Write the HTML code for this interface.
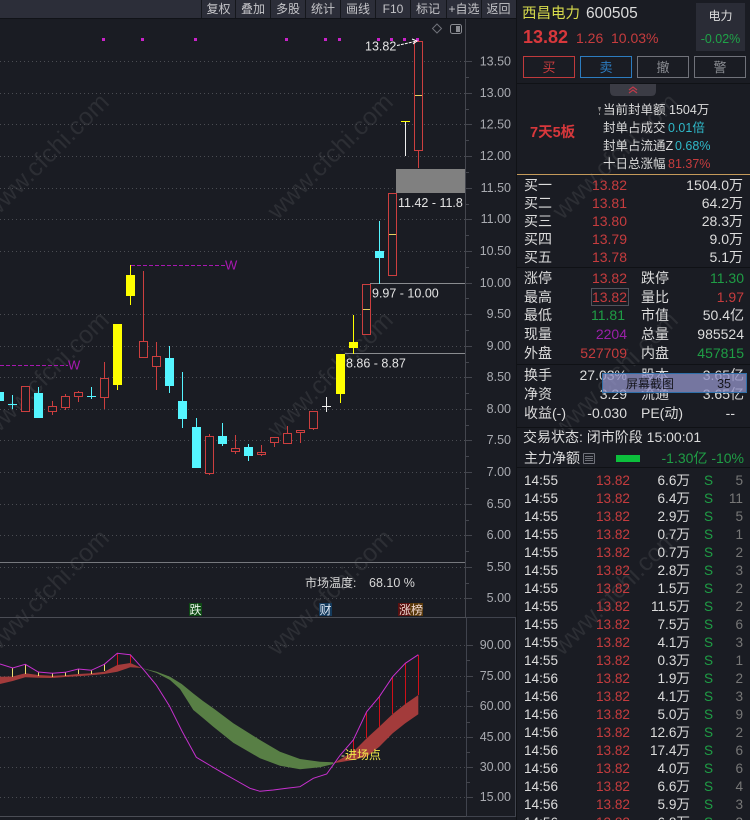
<!DOCTYPE html>
<html><head><meta charset="utf-8"><style>
html,body{margin:0;padding:0;background:#1a1c23;overflow:hidden}
svg{display:block;font-family:"Liberation Sans","Noto Sans CJK SC",sans-serif}
.g line{stroke:#4a4c52;stroke-width:1;stroke-dasharray:1 3}
.f{fill:#cc3f3f}.b{fill:#1a1c23}
.rl{stroke:#cc3f3f;stroke-width:1}
.cy{fill:#55f5ff}.cl{stroke:#55f5ff;stroke-width:1}
.ye{fill:#ffff00}.yl{stroke:#ffff00;stroke-width:1}
.wl{stroke:#eee;stroke-width:1}
.sh{shape-rendering:crispEdges}
.ax text{fill:#a8aab0;font-size:12.5px;text-anchor:end}
.w{fill:#dcdcdc}.rd{fill:#c63c3e}.gn{fill:#1f9d45}.gy{fill:#777}
.e{text-anchor:end}
.p text{font-size:14px}
.t text{font-size:13.6px}
.tb text{fill:#c4c4c8;font-size:12px;text-anchor:middle}
.wm text{fill:#2c2e34;font-size:25px;text-anchor:middle}
.lb{fill:#e4e4e4;font-size:12.5px}
</style></head><body>
<svg width="750" height="820" viewBox="0 0 750 820" xmlns="http://www.w3.org/2000/svg">
<rect width="750" height="820" fill="#1a1c23"/>

<!-- watermark -->
<g class="wm">
<text transform="translate(52,162) rotate(-45)">www.cfchi.com</text>
<text transform="translate(52,380) rotate(-45)">www.cfchi.com</text>
<text transform="translate(52,598) rotate(-45)">www.cfchi.com</text>
<text transform="translate(336,162) rotate(-45)">www.cfchi.com</text>
<text transform="translate(336,380) rotate(-45)">www.cfchi.com</text>
<text transform="translate(336,598) rotate(-45)">www.cfchi.com</text>
<text transform="translate(621,162) rotate(-45)">www.cfchi.com</text>
<text transform="translate(621,380) rotate(-45)">www.cfchi.com</text>
<text transform="translate(621,598) rotate(-45)">www.cfchi.com</text>
</g>

<!-- toolbar -->
<g class="sh">
<rect x="0" y="0" width="516" height="18" fill="#2c2e39"/>
<rect x="0" y="18" width="516" height="1" fill="#111318"/>
<rect x="201" y="0" width="1" height="18" fill="#15171c"/>
<rect x="235" y="0" width="1" height="18" fill="#15171c"/>
<rect x="270" y="0" width="1" height="18" fill="#15171c"/>
<rect x="305" y="0" width="1" height="18" fill="#15171c"/>
<rect x="340" y="0" width="1" height="18" fill="#15171c"/>
<rect x="375" y="0" width="1" height="18" fill="#15171c"/>
<rect x="410" y="0" width="1" height="18" fill="#15171c"/>
<rect x="446" y="0" width="1" height="18" fill="#15171c"/>
<rect x="481" y="0" width="1" height="18" fill="#15171c"/>
</g>
<g class="tb">
<text x="218.500" y="13">复权</text><text x="253" y="13">叠加</text><text x="288" y="13">多股</text><text x="323" y="13">统计</text><text x="358" y="13">画线</text><text x="393" y="13">F10</text><text x="428" y="13">标记</text><text x="464" y="13">+自选</text><text x="498.500" y="13">返回</text>
</g>

<!-- grid -->
<g class="g sh">
<line x1="0" x2="465" y1="61.500" y2="61.500"/><line x1="0" x2="465" y1="93.500" y2="93.500"/><line x1="0" x2="465" y1="124.500" y2="124.500"/><line x1="0" x2="465" y1="156.500" y2="156.500"/><line x1="0" x2="465" y1="188.500" y2="188.500"/><line x1="0" x2="465" y1="219.500" y2="219.500"/><line x1="0" x2="465" y1="251.500" y2="251.500"/><line x1="0" x2="465" y1="314.500" y2="314.500"/><line x1="0" x2="465" y1="346.500" y2="346.500"/><line x1="0" x2="465" y1="377.500" y2="377.500"/><line x1="0" x2="465" y1="409.500" y2="409.500"/><line x1="0" x2="465" y1="440.500" y2="440.500"/><line x1="0" x2="465" y1="472.500" y2="472.500"/><line x1="0" x2="465" y1="504.500" y2="504.500"/><line x1="0" x2="465" y1="535.500" y2="535.500"/><line x1="0" x2="465" y1="567.500" y2="567.500"/><line x1="0" x2="465" y1="598.500" y2="598.500"/>
<line x1="0" x2="465" y1="645.500" y2="645.500"/><line x1="0" x2="465" y1="676.500" y2="676.500"/><line x1="0" x2="465" y1="706.500" y2="706.500"/><line x1="0" x2="465" y1="737.500" y2="737.500"/><line x1="0" x2="465" y1="767.500" y2="767.500"/><line x1="0" x2="465" y1="797.500" y2="797.500"/>
</g>

<!-- frame lines -->
<g class="sh" stroke-width="1">
<line x1="465.500" x2="465.500" y1="19" y2="617" stroke="#44464e"/>
<line x1="0" x2="465" y1="562.500" y2="562.500" stroke="#77797e"/>
<line x1="0" x2="516" y1="617.500" y2="617.500" stroke="#4b4d55"/>
<line x1="0" x2="466" y1="816.500" y2="816.500" stroke="#4b4d55"/>
<rect x="466.500" y="617.500" width="49" height="199" fill="none" stroke="#40434d"/>
<line x1="516.500" x2="516.500" y1="0" y2="820" stroke="#101216"/>
<line x1="370" x2="465" y1="283.500" y2="283.500" stroke="#8a8c90"/>
<line x1="345" x2="465" y1="353.500" y2="353.500" stroke="#8a8c90"/>
</g>
<!-- axis ticks -->
<g class="sh" stroke="#44464e">
<line x1="465" x2="472" y1="61.500" y2="61.500"/><line x1="465" x2="469" y1="77.500" y2="77.500"/><line x1="465" x2="472" y1="93.500" y2="93.500"/><line x1="465" x2="469" y1="109.500" y2="109.500"/><line x1="465" x2="472" y1="124.500" y2="124.500"/><line x1="465" x2="469" y1="140.500" y2="140.500"/><line x1="465" x2="472" y1="156.500" y2="156.500"/><line x1="465" x2="469" y1="172.500" y2="172.500"/><line x1="465" x2="472" y1="188.500" y2="188.500"/><line x1="465" x2="469" y1="204.500" y2="204.500"/><line x1="465" x2="472" y1="219.500" y2="219.500"/><line x1="465" x2="469" y1="235.500" y2="235.500"/><line x1="465" x2="472" y1="251.500" y2="251.500"/><line x1="465" x2="469" y1="267.500" y2="267.500"/><line x1="465" x2="472" y1="283.500" y2="283.500"/><line x1="465" x2="469" y1="298.500" y2="298.500"/><line x1="465" x2="472" y1="314.500" y2="314.500"/><line x1="465" x2="469" y1="330.500" y2="330.500"/><line x1="465" x2="472" y1="346.500" y2="346.500"/><line x1="465" x2="469" y1="362.500" y2="362.500"/><line x1="465" x2="472" y1="377.500" y2="377.500"/><line x1="465" x2="469" y1="393.500" y2="393.500"/><line x1="465" x2="472" y1="409.500" y2="409.500"/><line x1="465" x2="469" y1="425.500" y2="425.500"/><line x1="465" x2="472" y1="440.500" y2="440.500"/><line x1="465" x2="469" y1="456.500" y2="456.500"/><line x1="465" x2="472" y1="472.500" y2="472.500"/><line x1="465" x2="469" y1="488.500" y2="488.500"/><line x1="465" x2="472" y1="504.500" y2="504.500"/><line x1="465" x2="469" y1="520.500" y2="520.500"/><line x1="465" x2="472" y1="535.500" y2="535.500"/><line x1="465" x2="469" y1="551.500" y2="551.500"/><line x1="465" x2="472" y1="567.500" y2="567.500"/><line x1="465" x2="469" y1="583.500" y2="583.500"/><line x1="465" x2="472" y1="598.500" y2="598.500"/>
<line x1="466" x2="473" y1="645.500" y2="645.500"/><line x1="466" x2="470" y1="660.500" y2="660.500"/><line x1="466" x2="473" y1="676.500" y2="676.500"/><line x1="466" x2="470" y1="691.500" y2="691.500"/><line x1="466" x2="473" y1="706.500" y2="706.500"/><line x1="466" x2="470" y1="722.500" y2="722.500"/><line x1="466" x2="473" y1="737.500" y2="737.500"/><line x1="466" x2="470" y1="752.500" y2="752.500"/><line x1="466" x2="473" y1="767.500" y2="767.500"/><line x1="466" x2="470" y1="782.500" y2="782.500"/><line x1="466" x2="473" y1="797.500" y2="797.500"/>
</g>
<g class="ax">
<text x="511" y="65.500">13.50</text><text x="511" y="97">13.00</text><text x="511" y="128.500">12.50</text><text x="511" y="160">12.00</text><text x="511" y="192">11.50</text><text x="511" y="223">11.00</text><text x="511" y="255">10.50</text><text x="511" y="287">10.00</text><text x="511" y="318">9.50</text><text x="511" y="350">9.00</text><text x="511" y="381">8.50</text><text x="511" y="413">8.00</text><text x="511" y="444">7.50</text><text x="511" y="476">7.00</text><text x="511" y="508">6.50</text><text x="511" y="539">6.00</text><text x="511" y="571">5.50</text><text x="511" y="602">5.00</text>
<text x="511" y="649">90.00</text><text x="511" y="680">75.00</text><text x="511" y="710">60.00</text><text x="511" y="741">45.00</text><text x="511" y="771">30.00</text><text x="511" y="801">15.00</text>
</g>

<!-- magenta dots -->
<g fill="#c822c8" class="sh">
<rect x="102" y="38" width="3" height="3"/><rect x="141" y="38" width="3" height="3"/><rect x="194" y="38" width="3" height="3"/><rect x="285" y="38" width="3" height="3"/><rect x="324" y="38" width="3" height="3"/><rect x="338" y="38" width="3" height="3"/><rect x="377" y="38" width="3" height="3"/><rect x="390" y="38" width="3" height="3"/><rect x="403" y="38" width="3" height="3"/><rect x="416" y="38" width="3" height="3"/>
</g>

<!-- gray zone -->
<rect x="396" y="169" width="69" height="24" fill="#808080" class="sh"/>

<!-- W lines -->
<g class="sh">
<line x1="131" x2="225" y1="265.500" y2="265.500" stroke="#a818b0" stroke-dasharray="4 2"/>
<line x1="0" x2="68" y1="365.500" y2="365.500" stroke="#a818b0" stroke-dasharray="4 2"/>
</g>
<text x="225" y="269.500" fill="#a818b0" font-size="13">W</text>
<text x="68" y="369.500" fill="#a818b0" font-size="13">W</text>

<!-- candles -->
<g class="sh">
<rect x="0" y="392" width="4" height="9" class="cy"/>
<line x1="12.500" x2="12.500" y1="395" y2="409" class="cl"/><line x1="8" x2="17" y1="404.500" y2="404.500" class="cl"/>
<rect x="21" y="386" width="9" height="26" class="f"/><rect x="22" y="387" width="7" height="24" class="b"/>
<line x1="38.500" x2="38.500" y1="387" y2="394" class="cl"/><rect x="34" y="393" width="9" height="25" class="cy"/>
<line x1="52.500" x2="52.500" y1="401" y2="415" class="rl"/><rect x="48" y="406" width="9" height="6" class="f"/><rect x="49" y="407" width="7" height="4" class="b"/>
<line x1="65.500" x2="65.500" y1="394" y2="410" class="rl"/><rect x="61" y="396" width="9" height="12" class="f"/><rect x="62" y="397" width="7" height="10" class="b"/>
<line x1="78.500" x2="78.500" y1="391" y2="402" class="rl"/><rect x="74" y="392" width="9" height="5" class="f"/><rect x="75" y="393" width="7" height="3" class="b"/>
<line x1="91.500" x2="91.500" y1="387" y2="399" class="cl"/><line x1="87" x2="96" y1="396.500" y2="396.500" class="cl"/>
<line x1="104.500" x2="104.500" y1="362" y2="409" class="rl"/><rect x="100" y="378" width="9" height="20" class="f"/><rect x="101" y="379" width="7" height="18" class="b"/>
<line x1="117.500" x2="117.500" y1="384" y2="390" class="yl"/><rect x="113" y="324" width="9" height="61" class="ye"/>
<line x1="130.500" x2="130.500" y1="265" y2="305" class="yl"/><rect x="126" y="275" width="9" height="21" class="ye"/>
<line x1="143.500" x2="143.500" y1="271" y2="341" class="rl"/><rect x="139" y="341" width="9" height="17" class="f"/><rect x="140" y="342" width="7" height="15" class="b"/>
<line x1="156.500" x2="156.500" y1="342" y2="390" class="rl"/><rect x="152" y="356" width="9" height="11" class="f"/><rect x="153" y="357" width="7" height="9" class="b"/>
<line x1="169.500" x2="169.500" y1="346" y2="393" class="cl"/><rect x="165" y="358" width="9" height="28" class="cy"/>
<line x1="182.500" x2="182.500" y1="372" y2="428" class="cl"/><rect x="178" y="401" width="9" height="18" class="cy"/>
<line x1="196.500" x2="196.500" y1="418" y2="428" class="cl"/><rect x="192" y="427" width="9" height="41" class="cy"/>
<line x1="209.500" x2="209.500" y1="434" y2="475" class="rl"/><rect x="205" y="436" width="9" height="38" class="f"/><rect x="206" y="437" width="7" height="36" class="b"/>
<line x1="222.500" x2="222.500" y1="423" y2="446" class="cl"/><rect x="218" y="436" width="9" height="8" class="cy"/>
<line x1="235.500" x2="235.500" y1="435" y2="454" class="rl"/><rect x="231" y="448" width="9" height="4" class="f"/><rect x="232" y="449" width="7" height="2" class="b"/>
<line x1="248.500" x2="248.500" y1="444" y2="461" class="cl"/><rect x="244" y="447" width="9" height="9" class="cy"/>
<line x1="261.500" x2="261.500" y1="445" y2="456" class="rl"/><rect x="257" y="452" width="9" height="3" class="f"/><rect x="258" y="453" width="7" height="1" class="b"/>
<line x1="274.500" x2="274.500" y1="437" y2="447" class="rl"/><rect x="270" y="437" width="9" height="6" class="f"/><rect x="271" y="438" width="7" height="4" class="b"/>
<line x1="287.500" x2="287.500" y1="426" y2="444" class="rl"/><rect x="283" y="433" width="9" height="11" class="f"/><rect x="284" y="434" width="7" height="9" class="b"/>
<line x1="300.500" x2="300.500" y1="430" y2="443" class="rl"/><rect x="296" y="430" width="9" height="3" class="f"/><rect x="297" y="431" width="7" height="1" class="b"/>
<line x1="313.500" x2="313.500" y1="411" y2="430" class="rl"/><rect x="309" y="411" width="9" height="18" class="f"/><rect x="310" y="412" width="7" height="16" class="b"/>
<line x1="326.500" x2="326.500" y1="397" y2="412" class="wl"/><line x1="322" x2="331" y1="406.500" y2="406.500" class="wl"/>
<line x1="340.500" x2="340.500" y1="394" y2="403" class="yl"/><rect x="336" y="354" width="9" height="40" class="ye"/>
<line x1="353.500" x2="353.500" y1="315" y2="354" class="yl"/><rect x="349" y="342" width="9" height="6" class="ye"/>
<rect x="362" y="284" width="9" height="51" class="f"/><rect x="363" y="285" width="7" height="49" class="b"/><line x1="363" x2="370" y1="309.500" y2="309.500" stroke="#e8d060"/>
<line x1="379.500" x2="379.500" y1="221" y2="284" class="cl"/><rect x="375" y="251" width="9" height="7" class="cy"/>
<rect x="388" y="193" width="9" height="83" class="f"/><rect x="389" y="194" width="7" height="81" class="b"/><line x1="389" x2="396" y1="234.500" y2="234.500" stroke="#e8d060"/>
<line x1="405.500" x2="405.500" y1="121" y2="156" class="wl"/><line x1="401" x2="410" y1="121.500" y2="121.500" class="yl"/>
<line x1="418.500" x2="418.500" y1="150" y2="168" class="rl"/><rect x="414" y="41" width="9" height="110" class="f"/><rect x="415" y="42" width="7" height="108" class="b"/><line x1="415" x2="422" y1="95.500" y2="95.500" stroke="#e8d060"/>
</g>

<!-- labels -->
<svg x="396" y="190" width="69" height="20" overflow="hidden"><text x="2" y="17" class="lb">11.42 - 11.8</text></svg>
<text x="372" y="297.500" class="lb">9.97 - 10.00</text>
<text x="346" y="367.500" class="lb">8.86 - 8.87</text>
<text x="365" y="50.500" class="lb">13.82</text>
<path d="M397 45.500 L415 41.500" stroke="#fff" stroke-dasharray="3 1" fill="none"/>
<path d="M412 39 L417 41 L413 44" stroke="#fff" fill="none"/>
<path d="M437 24 L441.500 28.500 L437 33 L432.500 28.500 Z" stroke="#70727a" fill="none"/>
<rect x="450.500" y="24.500" width="11" height="9" rx="2" stroke="#8a8c92" fill="none"/><rect x="456" y="26" width="4" height="6" fill="#8a8c92"/>

<text x="305" y="587" fill="#d8d8d8" font-size="12">市场温度:</text>
<text x="369" y="587" fill="#d8d8d8" font-size="12.500">68.10 %</text>
<rect x="189" y="603" width="13" height="13" fill="#0e4a14"/><text x="189.500" y="614" fill="#e8f4e8" font-size="12">跌</text>
<rect x="319" y="603" width="13" height="13" fill="#143a5c"/><text x="319.500" y="614" fill="#e0e8f4" font-size="12">财</text>
<rect x="398" y="603" width="12" height="13" fill="#5a1010"/><rect x="410" y="603" width="13" height="13" fill="#5a3a0c"/><text x="399" y="614" fill="#f0d8d0" font-size="12">涨榜</text>

<!-- lower indicator -->
<path d="M0 676.700 L12.700 676.500 L25.300 673.300 L38.300 675 L52.300 675.700 L65.300 675.300 L78.300 674 L91.300 673.300 L104.300 671.700 L117.300 665 L130.300 663 L141.700 668 L130.300 667.300 L117.300 671.700 L104.300 674 L91.300 675.300 L78.300 676.300 L65.300 677 L52.300 678 L38.300 677.700 L25.300 677.300 L12.700 681 L0 684 Z" fill="#a33b3b"/>
<path d="M141.700 668 L156.700 671.700 L170 676.700 L181.700 684 L193.300 693.500 L203 701 L213.300 708.300 L233.300 723.300 L260 740 L280 751.700 L300 759 L320 761.700 L333.300 762.300 L333.300 764 L320 767.300 L300 769.300 L280 765.700 L260 758.300 L233.300 742.700 L213.300 726.700 L203 718 L193.300 710 L187 700 L180 689 L170 680 L156.700 673 Z" fill="#587f45"/>
<path d="M333.300 763.300 L353.300 751.700 L366.700 738.300 L379.300 726.700 L392.700 714 L405.300 704 L418.300 695 L418.300 714.300 L405.300 723.300 L392.700 733.300 L379.300 746.700 L366.700 756.700 L353.300 760 Z" fill="#a33b3b"/>
<g class="sh">
<g stroke="#f0e070"><line x1="12.500" x2="12.500" y1="668" y2="677"/><line x1="25.500" x2="25.500" y1="664" y2="674"/><line x1="38.500" x2="38.500" y1="672" y2="676"/><line x1="52.500" x2="52.500" y1="673" y2="677"/><line x1="65.500" x2="65.500" y1="672" y2="676"/><line x1="78.500" x2="78.500" y1="669" y2="674"/><line x1="91.500" x2="91.500" y1="670" y2="674"/><line x1="104.500" x2="104.500" y1="664" y2="671"/></g>
<g stroke="#d01018"><line x1="117.500" x2="117.500" y1="653" y2="665"/><line x1="130.500" x2="130.500" y1="655" y2="663"/><line x1="353.500" x2="353.500" y1="740" y2="752"/><line x1="366.500" x2="366.500" y1="712" y2="738"/><line x1="379.500" x2="379.500" y1="697" y2="727"/><line x1="392.500" x2="392.500" y1="677" y2="714"/><line x1="405.500" x2="405.500" y1="663" y2="704"/><line x1="418.500" x2="418.500" y1="655" y2="695"/></g>
</g>
<path d="M0 664 L12.700 668 L25.300 664.300 L38.300 672 L52.300 673.300 L65.300 672.300 L78.300 669 L91.300 670.300 L104.300 664.300 L117.300 653.300 L130.300 654.700 L143.300 669.300 L156.300 685 L169.300 705.700 L182.300 731.700 L196.300 757.300 L209.300 765 L222.300 772.700 L235.300 780 L250 788.300 L260 791.300 L273.300 790 L286.700 788.300 L300 786.700 L313.300 778.300 L326.700 774 L340.300 755 L353.300 740 L366.700 711.700 L379.300 696.700 L392.700 676.700 L405.300 663.300 L418.300 654.700" fill="none" stroke="#c830d0" stroke-width="1"/>
<text x="341" y="759" fill="#f0e8a0" font-size="12">-</text>
<text x="345" y="759" fill="#f2e84a" font-size="12">进场点</text>

<!-- right panel: header -->
<text x="522" y="18" fill="#d8dc4c" font-size="14.500">西昌电力</text>
<text x="586" y="18" fill="#dcdcdc" font-size="15.500">600505</text>
<text x="523" y="43" fill="#d8383c" font-size="18" font-weight="bold">13.82</text>
<text x="576" y="43" fill="#c63c3e" font-size="14">1.26</text>
<text x="611" y="43" fill="#c63c3e" font-size="14">10.03%</text>
<rect x="696" y="3" width="49" height="48" fill="#2a2c36"/>
<text x="720.500" y="20" fill="#dcdcdc" font-size="12" text-anchor="middle">电力</text>
<text x="720.500" y="43" fill="#1fa348" font-size="12.500" text-anchor="middle">-0.02%</text>
<g class="sh" fill="none">
<rect x="523.500" y="56.500" width="51" height="21" stroke="#c03a3c"/>
<rect x="580.500" y="56.500" width="51" height="21" stroke="#2c7cc0"/>
<rect x="637.500" y="56.500" width="51" height="21" stroke="#70727a"/>
<rect x="694.500" y="56.500" width="51" height="21" stroke="#70727a"/>
<line x1="517" x2="750" y1="83.500" y2="83.500" stroke="#101216"/>
</g>
<text x="549" y="72" fill="#c83c3e" font-size="13" text-anchor="middle">买</text>
<text x="606" y="72" fill="#2c7cc0" font-size="13" text-anchor="middle">卖</text>
<text x="663" y="72" fill="#8a8c92" font-size="13" text-anchor="middle">撤</text>
<text x="720" y="72" fill="#8a8c92" font-size="13" text-anchor="middle">警</text>
<path d="M610 84 H656 V91 Q656 96 651 96 H615 Q610 96 610 91 Z" fill="#3b3c45"/>
<path d="M629 90 L633 87 L637 90 M629 93 L633 90 L637 93" stroke="#c03a4a" fill="none" stroke-width="1.200"/>

<text x="530" y="137" fill="#d8383c" font-size="14.500" font-weight="bold">7天5板</text>
<path d="M598 107 L599.500 112 L601 107 Z" fill="#888"/><rect x="599" y="113" width="1" height="2" fill="#888"/>
<g font-size="12.500">
<text x="603" y="114" fill="#dcdcdc">当前封单额</text><text x="669" y="114" fill="#dcdcdc">1504万</text>
<text x="603" y="132" fill="#dcdcdc">封单占成交</text><text x="668" y="132" fill="#2fb8c8">0.01倍</text>
<text x="603" y="150" fill="#dcdcdc">封单占流通Z</text><text x="675" y="150" fill="#2fb8c8">0.68%</text>
<text x="603" y="168" fill="#dcdcdc">十日总涨幅</text><text x="668" y="168" fill="#c63c3e">81.37%</text>
</g>
<line x1="517" x2="750" y1="174.500" y2="174.500" stroke="#c49a5a" class="sh"/>

<!-- order book -->
<g class="p">
<text x="524" y="190" class="w">买一</text><text x="627" y="190" class="rd e">13.82</text><text x="743" y="190" class="w e">1504.0万</text>
<text x="524" y="208" class="w">买二</text><text x="627" y="208" class="rd e">13.81</text><text x="743" y="208" class="w e">64.2万</text>
<text x="524" y="226" class="w">买三</text><text x="627" y="226" class="rd e">13.80</text><text x="743" y="226" class="w e">28.3万</text>
<text x="524" y="244" class="w">买四</text><text x="627" y="244" class="rd e">13.79</text><text x="743" y="244" class="w e">9.0万</text>
<text x="524" y="262" class="w">买五</text><text x="627" y="262" class="rd e">13.78</text><text x="743" y="262" class="w e">5.1万</text>

<text x="524" y="283" class="w">涨停</text><text x="627" y="283" class="rd e">13.82</text><text x="641" y="283" class="w">跌停</text><text x="744" y="283" class="gn e">11.30</text>
<text x="524" y="302" class="w">最高</text><text x="627" y="302" class="rd e">13.82</text><text x="641" y="302" class="w">量比</text><text x="744" y="302" class="rd e">1.97</text>
<text x="524" y="320" class="w">最低</text><text x="625" y="320" class="gn e">11.81</text><text x="641" y="320" class="w">市值</text><text x="744" y="320" class="w e">50.4亿</text>
<text x="524" y="339" class="w">现量</text><text x="627" y="339" fill="#9a20a8" class="e">2204</text><text x="641" y="339" class="w">总量</text><text x="744" y="339" class="w e">985524</text>
<text x="524" y="358" class="w">外盘</text><text x="627" y="358" class="rd e">527709</text><text x="641" y="358" class="w">内盘</text><text x="744" y="358" class="gn e">457815</text>

<text x="524" y="380" class="w">换手</text><text x="627" y="380" class="w e">27.03%</text><text x="641" y="380" class="w">股本</text><text x="744" y="380" class="w e">3.65亿</text>
<text x="524" y="399" class="w">净资</text><text x="627" y="399" class="w e">3.29</text><text x="641" y="399" class="w">流通</text><text x="744" y="399" class="w e">3.65亿</text>
<text x="524" y="418" class="w">收益(-)</text><text x="627" y="418" class="w e">-0.030</text><text x="641" y="418" class="w">PE(动)</text><text x="735" y="418" class="w e">--</text>

<text x="523" y="442" class="w">交易状态: 闭市阶段 15:00:01</text>
<text x="524" y="463" class="w">主力净额</text>
<text x="744" y="463" class="gn e">-1.30亿 -10%</text>
</g>
<rect x="591.500" y="288.500" width="37" height="17" fill="none" stroke="#50535c" class="sh"/>
<g class="sh">
<line x1="517" x2="750" y1="267.500" y2="267.500" stroke="#0f1115"/>
<line x1="517" x2="750" y1="364.500" y2="364.500" stroke="#0f1115"/>
<line x1="517" x2="750" y1="427.500" y2="427.500" stroke="#0f1115"/>
<line x1="517" x2="750" y1="467.500" y2="467.500" stroke="#0f1115"/>
<rect x="583.500" y="453.500" width="11" height="10" rx="1" fill="none" stroke="#70727a"/>
<path d="M585 456.500H593M585 458.500H593M585 460.500H593" stroke="#70727a"/>
<rect x="616" y="455" width="24" height="7" fill="#0cbf3c"/>
</g>

<!-- ticks -->
<g class="t">
<text x="524" y="485" class="w">14:55</text><text x="630" y="485" class="rd e">13.82</text><text x="690" y="485" class="w e">6.6万</text><text x="704" y="485" class="gn">S</text><text x="743" y="485" class="gy e">5</text>
<text x="524" y="503" class="w">14:55</text><text x="630" y="503" class="rd e">13.82</text><text x="690" y="503" class="w e">6.4万</text><text x="704" y="503" class="gn">S</text><text x="743" y="503" class="gy e">11</text>
<text x="524" y="521" class="w">14:55</text><text x="630" y="521" class="rd e">13.82</text><text x="690" y="521" class="w e">2.9万</text><text x="704" y="521" class="gn">S</text><text x="743" y="521" class="gy e">5</text>
<text x="524" y="539" class="w">14:55</text><text x="630" y="539" class="rd e">13.82</text><text x="690" y="539" class="w e">0.7万</text><text x="704" y="539" class="gn">S</text><text x="743" y="539" class="gy e">1</text>
<text x="524" y="557" class="w">14:55</text><text x="630" y="557" class="rd e">13.82</text><text x="690" y="557" class="w e">0.7万</text><text x="704" y="557" class="gn">S</text><text x="743" y="557" class="gy e">2</text>
<text x="524" y="575" class="w">14:55</text><text x="630" y="575" class="rd e">13.82</text><text x="690" y="575" class="w e">2.8万</text><text x="704" y="575" class="gn">S</text><text x="743" y="575" class="gy e">3</text>
<text x="524" y="593" class="w">14:55</text><text x="630" y="593" class="rd e">13.82</text><text x="690" y="593" class="w e">1.5万</text><text x="704" y="593" class="gn">S</text><text x="743" y="593" class="gy e">2</text>
<text x="524" y="611" class="w">14:55</text><text x="630" y="611" class="rd e">13.82</text><text x="690" y="611" class="w e">11.5万</text><text x="704" y="611" class="gn">S</text><text x="743" y="611" class="gy e">2</text>
<text x="524" y="629" class="w">14:55</text><text x="630" y="629" class="rd e">13.82</text><text x="690" y="629" class="w e">7.5万</text><text x="704" y="629" class="gn">S</text><text x="743" y="629" class="gy e">6</text>
<text x="524" y="647" class="w">14:55</text><text x="630" y="647" class="rd e">13.82</text><text x="690" y="647" class="w e">4.1万</text><text x="704" y="647" class="gn">S</text><text x="743" y="647" class="gy e">3</text>
<text x="524" y="665" class="w">14:55</text><text x="630" y="665" class="rd e">13.82</text><text x="690" y="665" class="w e">0.3万</text><text x="704" y="665" class="gn">S</text><text x="743" y="665" class="gy e">1</text>
<text x="524" y="683" class="w">14:56</text><text x="630" y="683" class="rd e">13.82</text><text x="690" y="683" class="w e">1.9万</text><text x="704" y="683" class="gn">S</text><text x="743" y="683" class="gy e">2</text>
<text x="524" y="701" class="w">14:56</text><text x="630" y="701" class="rd e">13.82</text><text x="690" y="701" class="w e">4.1万</text><text x="704" y="701" class="gn">S</text><text x="743" y="701" class="gy e">3</text>
<text x="524" y="719" class="w">14:56</text><text x="630" y="719" class="rd e">13.82</text><text x="690" y="719" class="w e">5.0万</text><text x="704" y="719" class="gn">S</text><text x="743" y="719" class="gy e">9</text>
<text x="524" y="737" class="w">14:56</text><text x="630" y="737" class="rd e">13.82</text><text x="690" y="737" class="w e">12.6万</text><text x="704" y="737" class="gn">S</text><text x="743" y="737" class="gy e">2</text>
<text x="524" y="755" class="w">14:56</text><text x="630" y="755" class="rd e">13.82</text><text x="690" y="755" class="w e">17.4万</text><text x="704" y="755" class="gn">S</text><text x="743" y="755" class="gy e">6</text>
<text x="524" y="773" class="w">14:56</text><text x="630" y="773" class="rd e">13.82</text><text x="690" y="773" class="w e">4.0万</text><text x="704" y="773" class="gn">S</text><text x="743" y="773" class="gy e">6</text>
<text x="524" y="791" class="w">14:56</text><text x="630" y="791" class="rd e">13.82</text><text x="690" y="791" class="w e">6.6万</text><text x="704" y="791" class="gn">S</text><text x="743" y="791" class="gy e">4</text>
<text x="524" y="809" class="w">14:56</text><text x="630" y="809" class="rd e">13.82</text><text x="690" y="809" class="w e">5.9万</text><text x="704" y="809" class="gn">S</text><text x="743" y="809" class="gy e">3</text>
<text x="524" y="827" class="w">14:56</text><text x="630" y="827" class="rd e">13.82</text><text x="690" y="827" class="w e">6.8万</text><text x="704" y="827" class="gn">S</text><text x="743" y="827" class="gy e">2</text>
</g>

<!-- screenshot overlay -->
<rect x="602.500" y="373.500" width="144" height="19" fill="#9090c4" fill-opacity="0.78" stroke="#2f6fa8" class="sh"/>
<text x="626" y="388" fill="#15151c" font-size="12">屏幕截图</text>
<text x="731" y="388" fill="#15151c" font-size="12.500" class="e">35</text>
</svg>
</body></html>
